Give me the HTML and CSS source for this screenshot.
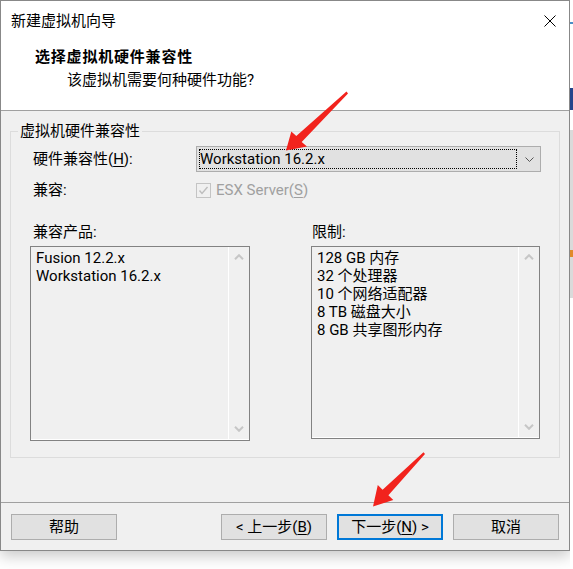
FILE: index.html
```html
<!DOCTYPE html>
<html lang="zh-CN">
<head>
<meta charset="utf-8">
<title>新建虚拟机向导</title>
<link rel="stylesheet" href="styles.css">
</head>
<body>
<div class="screen">
  <div class="window">
    <div class="titlebar">
      <span class="title">新建虚拟机向导</span>
      <span class="close">
        <svg width="12" height="12" viewBox="0 0 12 12"><path d="M0.5 0.5 L11.5 11.5 M11.5 0.5 L0.5 11.5" stroke="#000" stroke-width="1" fill="none"/></svg>
      </span>
    </div>
    <div class="header">
      <div class="h-title">选择虚拟机硬件兼容性</div>
      <div class="h-sub">该虚拟机需要何种硬件功能?</div>
    </div>
    <div class="body">
      <fieldset class="group">
        <legend>虚拟机硬件兼容性</legend>
        <div class="group-inner">
          <div class="row row-hw">
            <span class="lbl">硬件兼容性(<u>H</u>):</span>
            <div class="combo">
              <div class="combo-focus">Workstation 16.2.x</div>
              <div class="combo-arrow">
                <svg width="9" height="5" viewBox="0 0 9 5"><polyline points="0.5,0.5 4.5,4.5 8.5,0.5" fill="none" stroke="#555" stroke-width="1"/></svg>
              </div>
            </div>
          </div>
          <div class="row row-compat">
            <span class="lbl">兼容:</span>
            <span class="check">
              <span class="box">
                <svg width="13" height="13" viewBox="0 0 13 13"><polyline points="2.5,6.5 5,9.5 10.5,3" fill="none" stroke="#bdbdbd" stroke-width="1.4"/></svg>
              </span>
              <span>ESX Server(<u>S</u>)</span>
            </span>
          </div>
          <div class="lists">
            <div class="col col-left">
              <div class="col-lbl">兼容产品:</div>
              <div class="listbox">
                <div class="items">
                  <div>Fusion 12.2.x</div>
                  <div>Workstation 16.2.x</div>
                </div>
                <div class="sb">
                  <svg width="10" height="6" viewBox="0 0 10 6"><polyline points="1,5.2 5,1.2 9,5.2" fill="none" stroke="#c6c6c6" stroke-width="2"/></svg>
                  <svg width="10" height="6" viewBox="0 0 10 6"><polyline points="1,0.8 5,4.8 9,0.8" fill="none" stroke="#c6c6c6" stroke-width="2"/></svg>
                </div>
              </div>
            </div>
            <div class="col col-right">
              <div class="col-lbl">限制:</div>
              <div class="listbox">
                <div class="items">
                  <div>128 GB 内存</div>
                  <div>32 个处理器</div>
                  <div>10 个网络适配器</div>
                  <div>8 TB 磁盘大小</div>
                  <div>8 GB 共享图形内存</div>
                </div>
                <div class="sb">
                  <svg width="10" height="6" viewBox="0 0 10 6"><polyline points="1,5.2 5,1.2 9,5.2" fill="none" stroke="#c6c6c6" stroke-width="2"/></svg>
                  <svg width="10" height="6" viewBox="0 0 10 6"><polyline points="1,0.8 5,4.8 9,0.8" fill="none" stroke="#c6c6c6" stroke-width="2"/></svg>
                </div>
              </div>
            </div>
          </div>
        </div>
      </fieldset>
    </div>
    <div class="footer">
      <div class="btn">帮助</div>
      <div class="btn btn-back">&lt; 上一步(<u>B</u>)</div>
      <div class="btn btn-default">下一步(<u>N</u>) &gt;</div>
      <div class="btn">取消</div>
    </div>
  </div>
  <div class="strip"></div>
</div>
<svg class="annot" width="573" height="569" viewBox="0 0 573 569">
  <polygon points="348,93.5 301.7,141.9 307,146.5 286,150.5 291.3,131.5 296.3,136.1 346.5,91.5" fill="#f2231d"/>
  <polygon points="425,454 388.4,495.3 393.3,500 373,506.5 377.8,485 382.6,489.7 423.5,452.3" fill="#f2231d"/>
</svg>
</body>
</html>
```

FILE: styles.css
```css
* { box-sizing: border-box; }
html, body { margin: 0; padding: 0; }
body {
  width: 573px;
  height: 569px;
  overflow: hidden;
  position: relative;
  background: #fff;
  font-family: "Segoe UI", Roboto, "Noto Sans CJK SC", sans-serif;
  font-size: 15px;
  color: #000;
}
u { text-decoration: underline; text-underline-offset: 2px; }

.screen { display: flex; align-items: flex-start; }

.window {
  width: 570px;
  height: 551px;
  border: 1px solid #888;
  background: #f0f0f0;
  display: flex;
  flex-direction: column;
  box-shadow: 0 5px 14px rgba(0, 0, 0, 0.22);
  flex: none;
}

.strip {
  width: 3px;
  height: 569px;
  background: linear-gradient(to bottom,
    #fff 0, #fff 22px, #4a8fc6 22px, #4a8fc6 24px, #fff 24px,
    #fff 88px, #25458c 88px, #25458c 110px, #fff 110px,
    #fff 130px, #dadada 130px, #dadada 250px, #e08a2a 250px, #e08a2a 257px,
    #dadada 257px, #dadada 298px, #fff 298px);
}

/* title bar */
.titlebar {
  height: 39px;
  background: #fff;
  display: flex;
  align-items: center;
  padding-left: 10px;
}
.title { line-height: 20px; }
.close {
  margin-left: auto;
  width: 38px;
  height: 39px;
  display: flex;
  align-items: center;
  justify-content: center;
}

/* header */
.header {
  height: 71px;
  background: #fff;
  border-bottom: 1px solid #a0a0a0;
  padding: 7px 0 0 34px;
}
.h-title { font-weight: 700; line-height: 20px; letter-spacing: 0.8px; }
.h-sub { line-height: 20px; margin-top: 3px; padding-left: 32px; }

/* body */
.body {
  height: 391px;
  padding: 10px 9px 0 9px;
}
.group {
  margin: 0;
  padding: 0;
  border: 1px solid #dcdcdc;
  min-width: 0;
}
.group legend {
  margin-left: 7px;
  padding: 0 2px;
  line-height: 20px;
}
.group-inner { padding: 5px 18px 16px 19px; }

.row { display: flex; align-items: center; padding-left: 3px; }
.row-hw { height: 26px; }
.row-compat { height: 20px; margin-top: 8px; }
.lbl { width: 163px; line-height: 20px; flex: none; }

.combo {
  width: 345px;
  height: 26px;
  border: 1px solid #adadad;
  background: #e1e1e1;
  padding: 2px 0 2px 2px;
  display: flex;
}
.combo-focus {
  flex: 1;
  border: 1px dotted #000;
  display: flex;
  align-items: center;
  line-height: 18px;
}
.combo-arrow {
  width: 23px;
  display: flex;
  align-items: center;
  justify-content: center;
  padding-left: 2px;
}

.check { display: flex; align-items: center; gap: 5px; color: #a0a0a0; line-height: 20px; }
.box {
  width: 15px;
  height: 15px;
  border: 1px solid #c4c4c4;
  background: #f0f0f0;
  display: flex;
  align-items: center;
  justify-content: center;
}

.lists {
  display: grid;
  grid-template-columns: 220px 229px;
  column-gap: 61px;
  margin-top: 22px;
  align-items: start;
}
.col-lbl { line-height: 20px; margin-bottom: 4px; }
.col-left .col-lbl { padding-left: 3px; }
.col-right .col-lbl { padding-left: 1px; }

.listbox {
  border: 1px solid #828282;
  background: #f0f0f0;
  display: flex;
  box-shadow: inset 0 -1px 0 #fff;
}
.col-left .listbox { height: 195px; }
.col-right .listbox { height: 193px; }
.items { flex: 1; padding: 2px 5px; line-height: 18px; }
.sb {
  width: 21px;
  border-left: 1px solid #fff;
  display: flex;
  flex-direction: column;
  justify-content: space-between;
  align-items: center;
  padding: 7px 0 8px;
}

/* footer */
.footer {
  flex: 1;
  border-top: 1px solid #a0a0a0;
  display: flex;
  padding: 11px 10px 0 10px;
  gap: 10px;
}
.btn {
  width: 106px;
  height: 26px;
  background: #e1e1e1;
  border: 1px solid #adadad;
  display: flex;
  align-items: center;
  justify-content: center;
  line-height: 20px;
}
.btn-back { margin-left: auto; }
.btn-default { border: 2px solid #0078d7; }

.annot {
  position: absolute;
  top: 0;
  left: 0;
  pointer-events: none;
}
```
